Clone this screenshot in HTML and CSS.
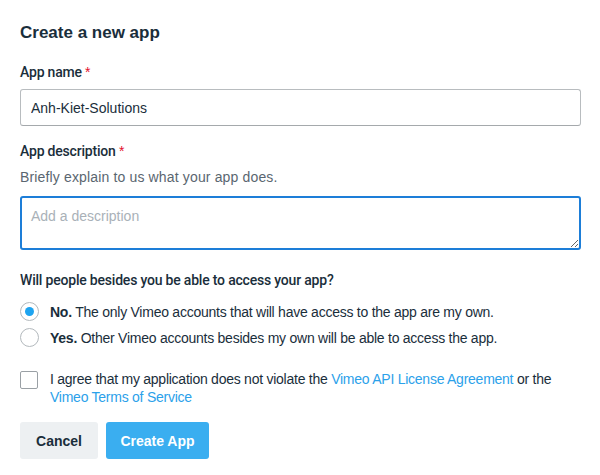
FILE: index.html
```html
<!DOCTYPE html>
<html lang="en">
<head>
    <meta charset="UTF-8">
    <title>Create a new app</title>
    <link rel="stylesheet" href="styles.css">
</head>
<body>
    <form class="app-form">
        <h1>Create a new app</h1>

        <div class="form-group">
            <label class="field-label" for="appName">App name <span class="req">*</span></label>
            <input type="text" id="appName" value="Anh-Kiet-Solutions">
        </div>

        <div class="form-group">
            <label class="field-label" for="appDesc">App description <span class="req">*</span></label>
            <p class="hint">Briefly explain to us what your app does.</p>
            <textarea id="appDesc" placeholder="Add a description"></textarea>
        </div>

        <div class="access">
            <p class="question">Will people besides you be able to access your app?</p>
            <label class="choice">
                <span class="radio checked"></span>
                <span><b>No.</b> The only Vimeo accounts that will have access to the app are my own.</span>
            </label>
            <label class="choice">
                <span class="radio"></span>
                <span><b>Yes.</b> Other Vimeo accounts besides my own will be able to access the app.</span>
            </label>
        </div>

        <label class="agree">
            <span class="checkbox"></span>
            <span>I agree that my application does not violate the <a href="#">Vimeo API License Agreement</a> or the <a href="#">Vimeo Terms of Service</a></span>
        </label>

        <div class="actions">
            <button type="button" class="btn btn-cancel">Cancel</button>
            <button type="submit" class="btn btn-create">Create App</button>
        </div>
    </form>
</body>
</html>
```

FILE: styles.css
```css
* {
    margin: 0;
    padding: 0;
    box-sizing: border-box;
    font-family: "Liberation Sans", Arial, sans-serif;
}

body {
    background: white;
    color: #1a2e3b;
}

.app-form {
    width: 600px;
    padding: 23px 19px 0 20px;
}

h1 {
    font-size: 17px;
    font-weight: 600;
    color: #1a2e3b;
    line-height: 20px;
    margin-bottom: 20px;
}

.form-group {
    margin-bottom: 16px;
}

.field-label,
.question {
    display: block;
    font-family: Roboto, "Liberation Sans", sans-serif;
    font-size: 14px;
    font-weight: 500;
    line-height: 18px;
    letter-spacing: -0.2px;
}

.field-label {
    margin-bottom: 8px;
}

.req {
    color: #e3102b;
}

.hint {
    font-size: 14px;
    color: #5a6670;
    line-height: 18px;
    letter-spacing: 0.15px;
    margin-top: 8px;
    margin-bottom: 10px;
}

input[type="text"],
textarea {
    display: block;
    width: 100%;
    font-size: 14px;
    color: #1a2e3b;
    border: 1px solid #b8bcbf;
    border-bottom-color: #a5a9ac;
    border-radius: 3px;
    padding: 0 10px;
    outline: none;
}

input[type="text"] {
    height: 37px;
}

textarea {
    height: 54px;
    padding: 10px 9px;
    border: 2px solid #1d7ed8;
    resize: vertical;
}

textarea::placeholder {
    color: #a9b1b8;
}

.question {
    margin-top: 21px;
    margin-bottom: 13px;
}

.choice {
    display: flex;
    align-items: center;
    gap: 11px;
    font-size: 14px;
    line-height: 18px;
    letter-spacing: -0.25px;
    margin-bottom: 7px;
}

.choice b {
    font-weight: 700;
}

.radio {
    width: 19px;
    height: 19px;
    border: 1px solid #b3b9bd;
    border-radius: 50%;
    flex-shrink: 0;
    position: relative;
}

.radio.checked::after {
    content: "";
    position: absolute;
    top: 4px;
    left: 4px;
    width: 9px;
    height: 9px;
    border-radius: 50%;
    background: #1ea4f0;
}

.agree {
    display: flex;
    align-items: flex-start;
    gap: 12px;
    font-size: 14px;
    line-height: 18px;
    letter-spacing: -0.25px;
    margin-top: 23px;
}

.checkbox {
    width: 18px;
    height: 18px;
    border: 1px solid #9aa0a5;
    border-radius: 2px;
    flex-shrink: 0;
    margin-top: 1px;
}

.agree a {
    color: #2ba1ea;
    text-decoration: none;
}

.actions {
    display: flex;
    gap: 8px;
    margin-top: 16px;
}

.btn {
    height: 37px;
    border: none;
    border-radius: 3px;
    font-size: 14px;
    font-weight: 700;
    cursor: pointer;
}

.btn-cancel {
    width: 78px;
    background: #edf0f2;
    color: #1a2e3b;
}

.btn-create {
    width: 103px;
    background: #3aaef0;
    color: white;
}
```
